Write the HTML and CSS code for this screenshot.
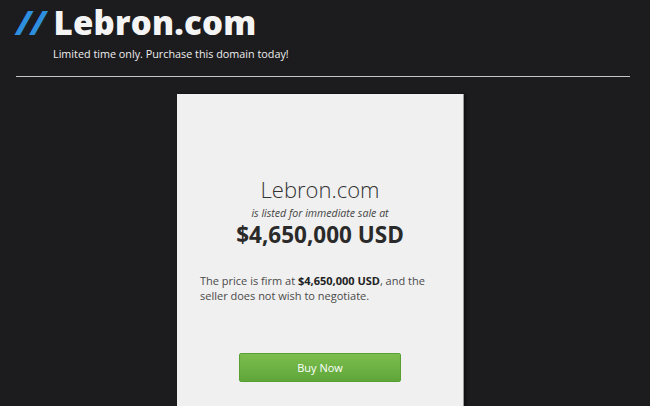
FILE: index.html
```html
<!DOCTYPE html>
<html lang="en">
<head>
  <meta charset="UTF-8">
  <meta name="viewport" content="width=device-width, initial-scale=1.0">
  <title>Lebron.com</title>
  <link rel="stylesheet" href="styles.css">
</head>
<body>

  <header class="top">
    <h1 class="logo"><span class="slashes">//</span> Lebron.com</h1>
    <p class="tagline">Limited time only. Purchase this domain today!</p>
  </header>

  <div class="card">
    <div class="domain">Lebron.com</div>
    <div class="listed">is listed for immediate sale at</div>
    <div class="price">$4,650,000 USD</div>

    <p class="note">The price is firm at <b>$4,650,000 USD</b>, and the seller does not wish to negotiate.</p>

    <button class="buy">Buy Now</button>
  </div>

</body>
</html>
```

FILE: styles.css
```css
body {
  font-family: "Open Sans", Arial, sans-serif;
  margin: 0;
  padding: 0;
  background-color: #1c1c1e;
  color: #333;
  overflow: hidden;
}

.top {
  margin: 0 20px 0 16px;
  padding-top: 1px;
  border-bottom: 1px solid #c4c4c4;
}

.logo {
  margin: 0;
  font-size: 33px;
  font-weight: 800;
  line-height: 44px;
  color: #f4f4f4;
  letter-spacing: 0.2px;
}

.slashes {
  color: #2f8fdf;
  font-style: italic;
  letter-spacing: -1px;
}

.tagline {
  margin: 1px 0 0 37px;
  padding-bottom: 15px;
  font-size: 10.8px;
  color: #eee;
  line-height: 15px;
}

.card {
  box-sizing: border-box;
  width: 287px;
  height: 330px;
  margin: 17px 0 0 177px;
  padding-top: 81px;
  background-color: #f0f0f0;
  border-right: 1px solid #999;
  box-shadow: 2px 0 3px rgba(0, 0, 0, 0.5);
  text-align: center;
}

.domain {
  font-size: 22px;
  font-weight: 300;
  line-height: 28px;
  color: #333;
}

.listed {
  margin-top: 3px;
  font-size: 10.6px;
  font-style: italic;
  color: #444;
  line-height: 14px;
}

.price {
  margin-top: 1px;
  font-size: 22.5px;
  font-weight: 700;
  color: #2a2a2a;
  line-height: 28px;
}

.note {
  margin: 24px 23px 0 23px;
  text-align: left;
  font-size: 11px;
  line-height: 15px;
  color: #4a4a4a;
}

.note b {
  color: #222;
}

.buy {
  margin-top: 50px;
  width: 162px;
  height: 29px;
  border: 1px solid #58a032;
  border-radius: 2px;
  background: linear-gradient(#7cbe4d, #5fa63a);
  color: #fff;
  font-family: "Open Sans", Arial, sans-serif;
  font-size: 11px;
  cursor: pointer;
}
```
